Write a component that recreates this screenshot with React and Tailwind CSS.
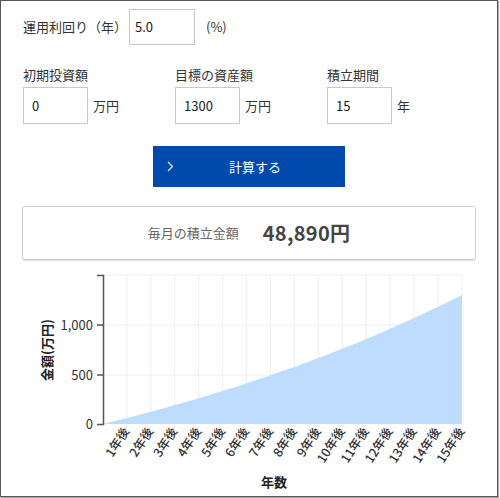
import React from "react";

const font = { fontFamily: '"Noto Sans CJK JP", "Noto Sans", sans-serif' };

// chart geometry (page coordinates, svg viewBox is offset to match)
const X0 = 102;
const STEP = 23.93;
const Y0 = 426;
const PER = 149 / 1500;
const years = Array.from({ length: 15 }, (_, i) => i + 1);
const value = (k) => (1300 * (Math.pow(1.05, k) - 1)) / (Math.pow(1.05, 15) - 1);

const Field = ({ label, val, unit }) => (
  <div className="w-[152px]">
    <div className="text-[13px] leading-[18px] text-[#333]">{label}</div>
    <div className="flex items-center mt-[3px]">
      <div className="w-[65px] h-[37px] border border-[#c8c8c8] bg-white flex items-center pl-[8px] text-[13px] text-[#222]">
        {val}
      </div>
      <span className="ml-[5px] text-[13px] text-[#333]">{unit}</span>
    </div>
  </div>
);

const Chart = () => {
  const pts = [[X0, Y0]];
  for (let k = 0; k <= 60; k++) {
    const t = k / 4;
    pts.push([X0 + t * STEP, Y0 - value(t) * PER]);
  }
  pts.push([X0 + 15 * STEP, Y0]);
  const d = "M" + pts.map((p) => p[0].toFixed(1) + "," + p[1].toFixed(1)).join("L") + "Z";
  return (
    <svg width="498" height="232" viewBox="0 264 498 232" className="block">
      {/* grid */}
      {[277, 327, 377].map((y) => (
        <line key={y} x1={X0} x2={X0 + 15 * STEP} y1={y} y2={y} stroke="#eeeeee" strokeWidth="1" />
      ))}
      {years.map((k) => (
        <line key={k} x1={X0 + k * STEP} x2={X0 + k * STEP} y1={277} y2={Y0} stroke="#eeeeee" strokeWidth="1" />
      ))}
      <path d={d} fill="#bedcfd" />
      {/* y axis */}
      <path d={`M96,277.5H102.5V426.5H96`} fill="none" stroke="#555" strokeWidth="1.5" />
      {[
        [327, "1,000"],
        [377, "500"],
      ].map(([y, t]) => (
        <g key={t}>
          <line x1="96" x2="102" y1={y} y2={y} stroke="#555" strokeWidth="1.5" />
          <text x="92" y={y + 4.5} textAnchor="end" fontSize="13" fill="#333" style={font}>
            {t}
          </text>
        </g>
      ))}
      <text x="92" y={430.5} textAnchor="end" fontSize="13" fill="#333" style={font}>
        0
      </text>
      {/* x labels */}
      {years.map((k) => {
        const x = X0 + k * STEP + 3;
        const y = 433;
        return (
          <text
            key={k}
            x={x}
            y={y}
            textAnchor="end"
            fontSize="12.5"
            fontWeight="500"
            fill="#333"
            transform={`rotate(-57 ${x} ${y})`}
            style={font}
          >
            {k}年後
          </text>
        );
      })}
      <text
        x="47"
        y="352"
        textAnchor="middle"
        fontSize="13"
        fontWeight="bold"
        fill="#222"
        transform="rotate(-90 47 352)"
        dominantBaseline="middle"
        style={font}
      >
        金額(万円)
      </text>
      <text x="273" y="489" textAnchor="middle" fontSize="13" fontWeight="bold" fill="#222" style={font}>
        年数
      </text>
    </svg>
  );
};

export default function App() {
  return (
    <div className="w-[500px] h-[498px] bg-white" style={font}>
      <div className="w-[498px] h-[497px] border border-[#555] shadow-[1px_1px_0_#aaa] bg-white">
        {/* rate row */}
        <div className="flex items-center pl-[22px] pt-[8px]">
          <span className="text-[13px] text-[#333] w-[106px]">運用利回り（年）</span>
          <div className="w-[66px] h-[36px] border border-[#c8c8c8] flex items-center pl-[5px] text-[13px] text-[#222]">
            5.0
          </div>
          <span className="ml-[11px] text-[13px] text-[#333]">(%)</span>
        </div>

        {/* amounts row */}
        <div className="flex pl-[22px] mt-[21px]">
          <Field label="初期投資額" val="0" unit="万円" />
          <Field label="目標の資産額" val="1300" unit="万円" />
          <Field label="積立期間" val="15" unit="年" />
        </div>

        {/* button */}
        <div className="flex justify-center mt-[22px]">
          <button className="relative w-[192px] h-[41px] bg-[#0049ad] text-white text-[13px] pl-[12px]">
            <svg className="absolute left-[14px] top-[15px]" width="7" height="11" viewBox="0 0 7 11">
              <path d="M1,1L5.5,5.5L1,10" fill="none" stroke="#dfe8f7" strokeWidth="1.2" />
            </svg>
            計算する
          </button>
        </div>

        {/* result */}
        <div className="mx-[21px] mt-[19px] h-[54px] border border-[#cfcfcf] rounded-[3px] shadow-[0_1px_0_#ddd] flex items-center justify-center">
          <span className="text-[13px] text-[#666]">毎月の積立金額</span>
          <span className="ml-[24px] text-[20px] font-bold text-[#444] tracking-[0.3px]">48,890円</span>
        </div>

        <div className="mt-[2px]">
          <Chart />
        </div>
      </div>
    </div>
  );
}
